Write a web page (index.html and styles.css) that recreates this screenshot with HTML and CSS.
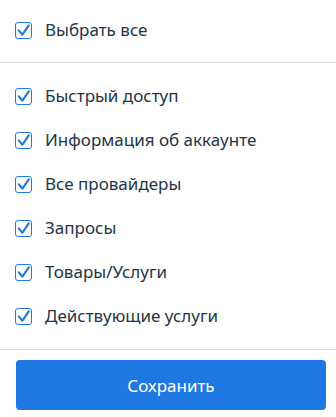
FILE: index.html
```html
<!DOCTYPE html>
<html lang="ru">
<head>
    <meta charset="UTF-8">
    <meta name="viewport" content="width=device-width, initial-scale=1.0">
    <title>Настройки</title>
    <link rel="stylesheet" href="styles.css">
</head>
<body>
    <div class="panel">
        <div class="select-all">
            <label class="option">
                <span class="check"><svg viewBox="0 0 15 15"><path d="M2.8 7.4l3.6 4.3 6.4-9.4"/></svg></span>
                <span class="label">Выбрать все</span>
            </label>
        </div>
        <div class="list">
            <label class="option">
                <span class="check"><svg viewBox="0 0 15 15"><path d="M2.8 7.4l3.6 4.3 6.4-9.4"/></svg></span>
                <span class="label">Быстрый доступ</span>
            </label>
            <label class="option">
                <span class="check"><svg viewBox="0 0 15 15"><path d="M2.8 7.4l3.6 4.3 6.4-9.4"/></svg></span>
                <span class="label">Информация об аккаунте</span>
            </label>
            <label class="option">
                <span class="check"><svg viewBox="0 0 15 15"><path d="M2.8 7.4l3.6 4.3 6.4-9.4"/></svg></span>
                <span class="label">Все провайдеры</span>
            </label>
            <label class="option">
                <span class="check"><svg viewBox="0 0 15 15"><path d="M2.8 7.4l3.6 4.3 6.4-9.4"/></svg></span>
                <span class="label">Запросы</span>
            </label>
            <label class="option">
                <span class="check"><svg viewBox="0 0 15 15"><path d="M2.8 7.4l3.6 4.3 6.4-9.4"/></svg></span>
                <span class="label">Товары/Услуги</span>
            </label>
            <label class="option">
                <span class="check"><svg viewBox="0 0 15 15"><path d="M2.8 7.4l3.6 4.3 6.4-9.4"/></svg></span>
                <span class="label">Действующие услуги</span>
            </label>
        </div>
        <div class="footer">
            <button class="save">Сохранить</button>
        </div>
    </div>
</body>
</html>
```

FILE: styles.css
```css
body {
    margin: 0;
    background: #fff;
    font-family: "Noto Sans", "Open Sans", sans-serif;
    color: #243447;
}
.panel {
    width: 336px;
}
.select-all {
    height: 60px;
    padding-bottom: 2px;
    display: flex;
    align-items: center;
    border-bottom: 1px solid #dcdcdc;
}
.list {
    padding: 11px 0;
    border-bottom: 1px solid #dcdcdc;
}
.option {
    display: flex;
    align-items: center;
    height: 44px;
    padding-left: 15px;
    font-size: 17px;
    cursor: pointer;
}
.label {
    padding-bottom: 2px;
}
.check {
    width: 15px;
    height: 15px;
    border: 1.5px solid #1f7ae5;
    border-radius: 3px;
    margin-right: 13px;
    display: flex;
}
.check svg {
    width: 15px;
    height: 15px;
    overflow: visible;
    fill: none;
    stroke: #1f7ae5;
    stroke-width: 2.2;
    stroke-linecap: round;
    stroke-linejoin: round;
}
.footer {
    padding: 10px 10px 0 16px;
}
.save {
    width: 310px;
    height: 50px;
    border: none;
    border-radius: 4px;
    background: #1f78e1;
    color: #fff;
    font-family: inherit;
    font-size: 17px;
    cursor: pointer;
}
```
